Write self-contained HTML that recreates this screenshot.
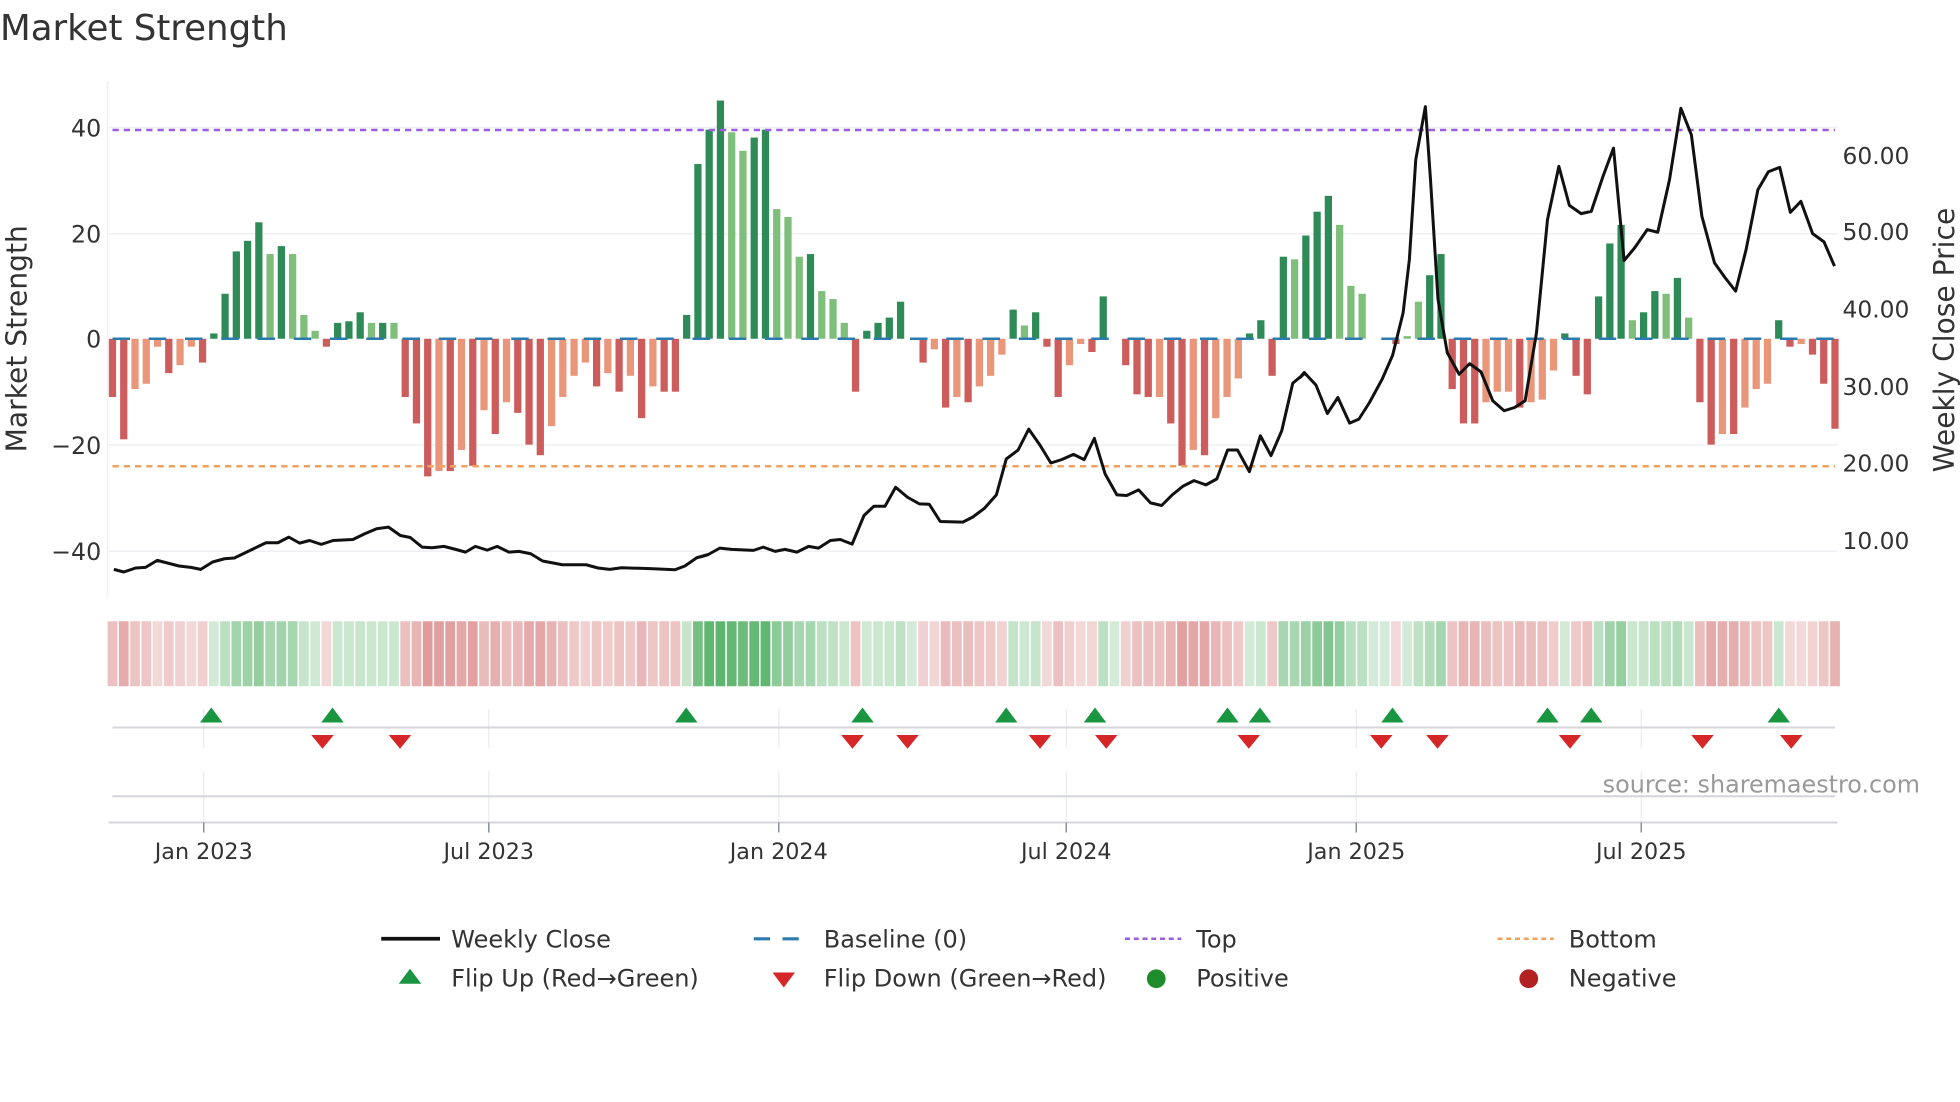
<!DOCTYPE html>
<html><head><meta charset="utf-8"><style>
html,body{margin:0;padding:0;background:#fff;width:1960px;height:1102px;overflow:hidden}
svg{display:block;font-family:"DejaVu Sans","Liberation Sans",sans-serif}
</style></head><body>
<svg id="s" width="1960" height="1102" viewBox="0 0 1568 881.6" xmlns="http://www.w3.org/2000/svg">
<rect width="1568" height="882" fill="#fff"/>
<text x="0" y="32" font-size="28.5" fill="#333">Market Strength</text>
<g stroke="#eef0f4" stroke-width="1.2">
<line x1="87" x2="1470" y1="102" y2="102"/><line x1="87" x2="1470" y1="187" y2="187"/>
<line x1="87" x2="1470" y1="356" y2="356"/><line x1="87" x2="1470" y1="441" y2="441"/>
<line x1="86" x2="86" y1="65" y2="478"/>
</g>
<g font-size="19" fill="#333" text-anchor="end">
<text x="81" y="109">40</text><text x="81" y="194">20</text><text x="81" y="278">0</text>
<text x="81" y="363">−20</text><text x="81" y="448">−40</text>
</g>
<g font-size="18.7" fill="#333">
<text x="1474" y="131">60.00</text><text x="1474" y="192">50.00</text><text x="1474" y="254">40.00</text>
<text x="1474" y="316">30.00</text><text x="1474" y="377">20.00</text><text x="1474" y="439">10.00</text>
</g>
<text transform="translate(21,271) rotate(-90)" font-size="22.5" fill="#333" text-anchor="middle">Market Strength</text>
<text transform="translate(1563,272) rotate(-90)" font-size="22.5" fill="#333" text-anchor="middle">Weekly Close Price</text>
<g id="bars"></g>
<line x1="90" x2="1468" y1="271" y2="271" stroke="#2b7bb0" stroke-width="2" stroke-dasharray="14,15"/>
<line x1="90" x2="1468" y1="104" y2="104" stroke="#9b5de5" stroke-width="2" stroke-dasharray="5,4"/>
<line x1="90" x2="1468" y1="373" y2="373" stroke="#f0a15e" stroke-width="2" stroke-dasharray="5,4"/>
<polyline id="price" fill="none" stroke="#111" stroke-width="2.4" stroke-linejoin="round"/>
<g id="strip"></g>
<g stroke="#e8ebf0" stroke-width="1">
<line x1="163" x2="163" y1="567" y2="598"/><line x1="391" x2="391" y1="567" y2="598"/><line x1="623" x2="623" y1="567" y2="598"/><line x1="853" x2="853" y1="567" y2="598"/><line x1="1085" x2="1085" y1="567" y2="598"/><line x1="1313" x2="1313" y1="567" y2="598"/>
<line x1="163" x2="163" y1="617" y2="658"/><line x1="391" x2="391" y1="617" y2="658"/><line x1="623" x2="623" y1="617" y2="658"/><line x1="853" x2="853" y1="617" y2="658"/><line x1="1085" x2="1085" y1="617" y2="658"/><line x1="1313" x2="1313" y1="617" y2="658"/>
</g>
<g stroke="#d4d6da" stroke-width="1.6">
<line x1="90" x2="1468" y1="582" y2="582"/>
<line x1="90" x2="1468" y1="637" y2="637"/>
<line x1="87" x2="1470" y1="658" y2="658"/>
</g>
<g stroke="#8a8f99" stroke-width="1.2">
<line x1="163" x2="163" y1="658" y2="666"/><line x1="391" x2="391" y1="658" y2="666"/><line x1="623" x2="623" y1="658" y2="666"/><line x1="853" x2="853" y1="658" y2="666"/><line x1="1085" x2="1085" y1="658" y2="666"/><line x1="1313" x2="1313" y1="658" y2="666"/>
</g>
<g id="marks"></g>
<g font-size="17.8" fill="#333" text-anchor="middle">
<text x="163" y="687">Jan 2023</text><text x="391" y="687">Jul 2023</text><text x="623" y="687">Jan 2024</text>
<text x="853" y="687">Jul 2024</text><text x="1085" y="687">Jan 2025</text><text x="1313" y="687">Jul 2025</text>
</g>
<text x="1536" y="634" font-size="19.1" fill="#999" text-anchor="end">source: sharemaestro.com</text>
<g font-size="19.2" fill="#333">
<line x1="305" x2="352" y1="751" y2="751" stroke="#111" stroke-width="3"/>
<text x="361" y="758">Weekly Close</text>
<line x1="603" x2="647" y1="751" y2="751" stroke="#2b7bb0" stroke-width="2.5" stroke-dasharray="13,10"/>
<text x="659" y="758">Baseline (0)</text>
<line x1="900" x2="945" y1="751" y2="751" stroke="#9b5de5" stroke-width="2" stroke-dasharray="4,3"/>
<text x="957" y="758">Top</text>
<line x1="1198" x2="1243" y1="751" y2="751" stroke="#f0a15e" stroke-width="2" stroke-dasharray="4,3"/>
<text x="1255" y="758">Bottom</text>
<polygon points="319,787 337,787 328,775" fill="#1a9641"/>
<text x="361" y="789">Flip Up (Red→Green)</text>
<polygon points="618,778 636,778 627,790" fill="#d62728"/>
<text x="659" y="789">Flip Down (Green→Red)</text>
<circle cx="925" cy="783" r="7.5" fill="#1e8c2a"/>
<text x="957" y="789">Positive</text>
<circle cx="1223" cy="783" r="7.5" fill="#b22222"/>
<text x="1255" y="789">Negative</text>
</g>
</svg>
<script>
var NS="http://www.w3.org/2000/svg";
function el(t,a,p){var e=document.createElementNS(NS,t);for(var k in a)e.setAttribute(k,a[k]);p.appendChild(e);return e;}
var d=[[-11,1],[-19,1],[-9.5,0],[-8.5,0],[-1.5,0],[-6.5,1],[-5,0],[-1.5,0],[-4.5,1],[1,1],[8.5,1],[16.5,1],[18.5,1],[22,1],[16,0],[17.5,1],[16,0],[4.5,0],[1.5,0],[-1.5,1],[3,1],[3.3,1],[5,1],[3,0],[3,1],[3,0],
[-11,1],[-16,1],[-26,1],[-25,0],[-25,1],[-21,0],[-24,1],[-13.5,0],[-18,1],[-12,0],[-14,1],[-20,1],[-22,1],[-16.5,0],[-11,0],[-7,0],[-4.5,0],[-9,1],[-6.5,0],[-10,1],[-7,0],[-15,1],[-9,0],[-10,1],[-10,1],
[4.5,1],[33,1],[39.5,1],[45,1],[39,0],[35.5,0],[38,1],[39.5,1],[24.5,0],[23,0],[15.5,0],[16,1],[9,0],[7.5,0],[3,0],[-10,1],[1.5,1],[3,1],[4,1],[7,1],[0,0],
[-4.5,1],[-2,0],[-13,1],[-11,0],[-12,1],[-9,0],[-7,0],[-3,0],[5.5,1],[2.5,0],[5,1],[-1.5,1],[-11,1],[-5,0],[-1,0],[-2.5,1],[8,1],[0,0],[-5,1],[-10.5,1],[-11,1],[-11,0],[-16,1],[-24,1],[-21,0],[-22,1],[-15,0],[-11,0],[-7.5,0],[1,1],[3.5,1],[-7,1],
[15.5,1],[15,0],[19.5,1],[24,1],[27,1],[21.5,0],[10,0],[8.5,0],[0,0],[0,0],[-1,1],[0.5,0],[7,0],[12,1],[16,1],
[-9.5,1],[-16,1],[-16,1],[-12,0],[-10,0],[-10,0],[-13,1],[-12,0],[-11.5,0],[-6,0],[1,1],[-7,1],[-10.5,1],
[8,1],[18,1],[21.5,1],[3.5,0],[5,1],[9,1],[8.5,0],[11.5,1],[4,0],
[-12,1],[-20,1],[-18,0],[-18,1],[-13,0],[-9.5,0],[-8.5,0],[3.5,1],[-1.5,1],[-1,0],[-3,1],[-8.5,1],[-17,1]];
var N=d.length,sp=1378/(N-1),bars=document.getElementById('bars'),strip=document.getElementById('strip');
var last=-1;
for(var i=0;i<N;i++){var v=d[i][0],x=90+i*sp,h=Math.abs(v)*4.235;
 var c=v>=0?(d[i][1]?'#2e8b57':'#7fbf7b'):(d[i][1]?'#cd5c5c':'#e9967a');
 if(h>0.3)el('rect',{x:x-2.9,y:v>=0?271-h:271,width:5.8,height:h,fill:c},bars);
 var s=v>0?1:(v<0?-1:last);last=s;var a=0.22+0.6*Math.min(Math.abs(v)/40,1);
 el('rect',{x:x-sp/2+0.6,y:497,width:sp-1.2,height:52,fill:s>0?'rgb(60,165,80)':'rgb(205,92,92)','fill-opacity':a.toFixed(2)},strip);}
function conv(pts,ox,fx){return pts.map(function(p){return (ox+p[0]/fx).toFixed(1)+','+(64+p[1]/3.76).toFixed(1);});}
var z3=[[35,1472],[60,1480],[90,1468],[115,1466],[145,1445],[200,1462],[230,1466],[255,1472],[285,1450],[315,1440],[340,1438],[380,1415],[420,1392],[450,1392],[478,1375],[505,1393],[530,1385],[560,1397],[590,1385],[640,1382],[670,1365],[700,1350],[730,1345],[760,1370],[785,1376],[815,1405],[840,1407],[870,1403],[900,1412],[925,1420],[950,1403],[980,1414],[1005,1403],[1035,1420],[1060,1418],[1090,1425],[1120,1447],[1170,1458],[1230,1458],[1260,1468],[1290,1472],[1320,1467],[1400,1470],[1455,1473],[1480,1462],[1510,1437],[1540,1427]];
var z4=[[0,1435],[20,1428],[50,1408],[80,1412],[135,1415],[160,1405],[190,1418],[215,1412],[245,1420],[275,1403],[300,1408],[330,1385],[355,1382],[385,1396],[415,1310],[440,1282],[468,1282],[495,1225],[525,1255],[555,1275],[580,1276],[608,1328],[665,1330],[690,1315],[720,1288],[750,1248],[775,1140],[805,1113],[832,1050],[860,1098],[888,1152],[915,1142],[945,1126],[972,1142],[998,1078],[1025,1185],[1055,1248],[1080,1250],[1110,1233],[1140,1272],[1168,1280],[1195,1248],[1222,1222],[1250,1205],[1280,1218],[1308,1200],[1335,1113],[1360,1113],[1390,1178],[1418,1070],[1445,1130],[1472,1055],[1500,912],[1530,882]];
var z5=[[0,895],[10,880],[38,918],[65,1003],[90,955],[118,1032],[140,1020],[165,970],[195,900],[220,828],[245,700],[260,540],[275,240],[298,80],[310,300],[328,660],[350,820],[378,885],[403,853],[430,878],[458,965],[485,995],[510,985],[535,965],[562,760],[588,420],[615,260],[640,377],[668,402],[692,395],[720,290],[745,205],[770,543],[795,505],[825,450],[850,458],[878,300],[905,85],[930,165],[955,410],[985,550],[1010,595],[1035,635],[1060,510],[1088,330],[1113,276],[1140,263],[1165,398],[1190,365],[1218,462],[1245,487],[1270,560]];
var pts=conv(z3,80,3.163).concat(conv(z4,560,3.163),conv(z5,1040,2.97));
document.getElementById('price').setAttribute('points',pts.join(' '));
var m=document.getElementById('marks');
[169,266,549,690,805,876,982,1008,1114,1238,1273,1423].forEach(function(x){el('polygon',{points:(x-9)+',578 '+(x+9)+',578 '+x+',566',fill:'#1a9641'},m);});
[258,320,682,726,832,885,999,1105,1150,1256,1362,1433].forEach(function(x){el('polygon',{points:(x-9)+',588 '+(x+9)+',588 '+x+',599',fill:'#d62728'},m);});
</script>
</body></html>
